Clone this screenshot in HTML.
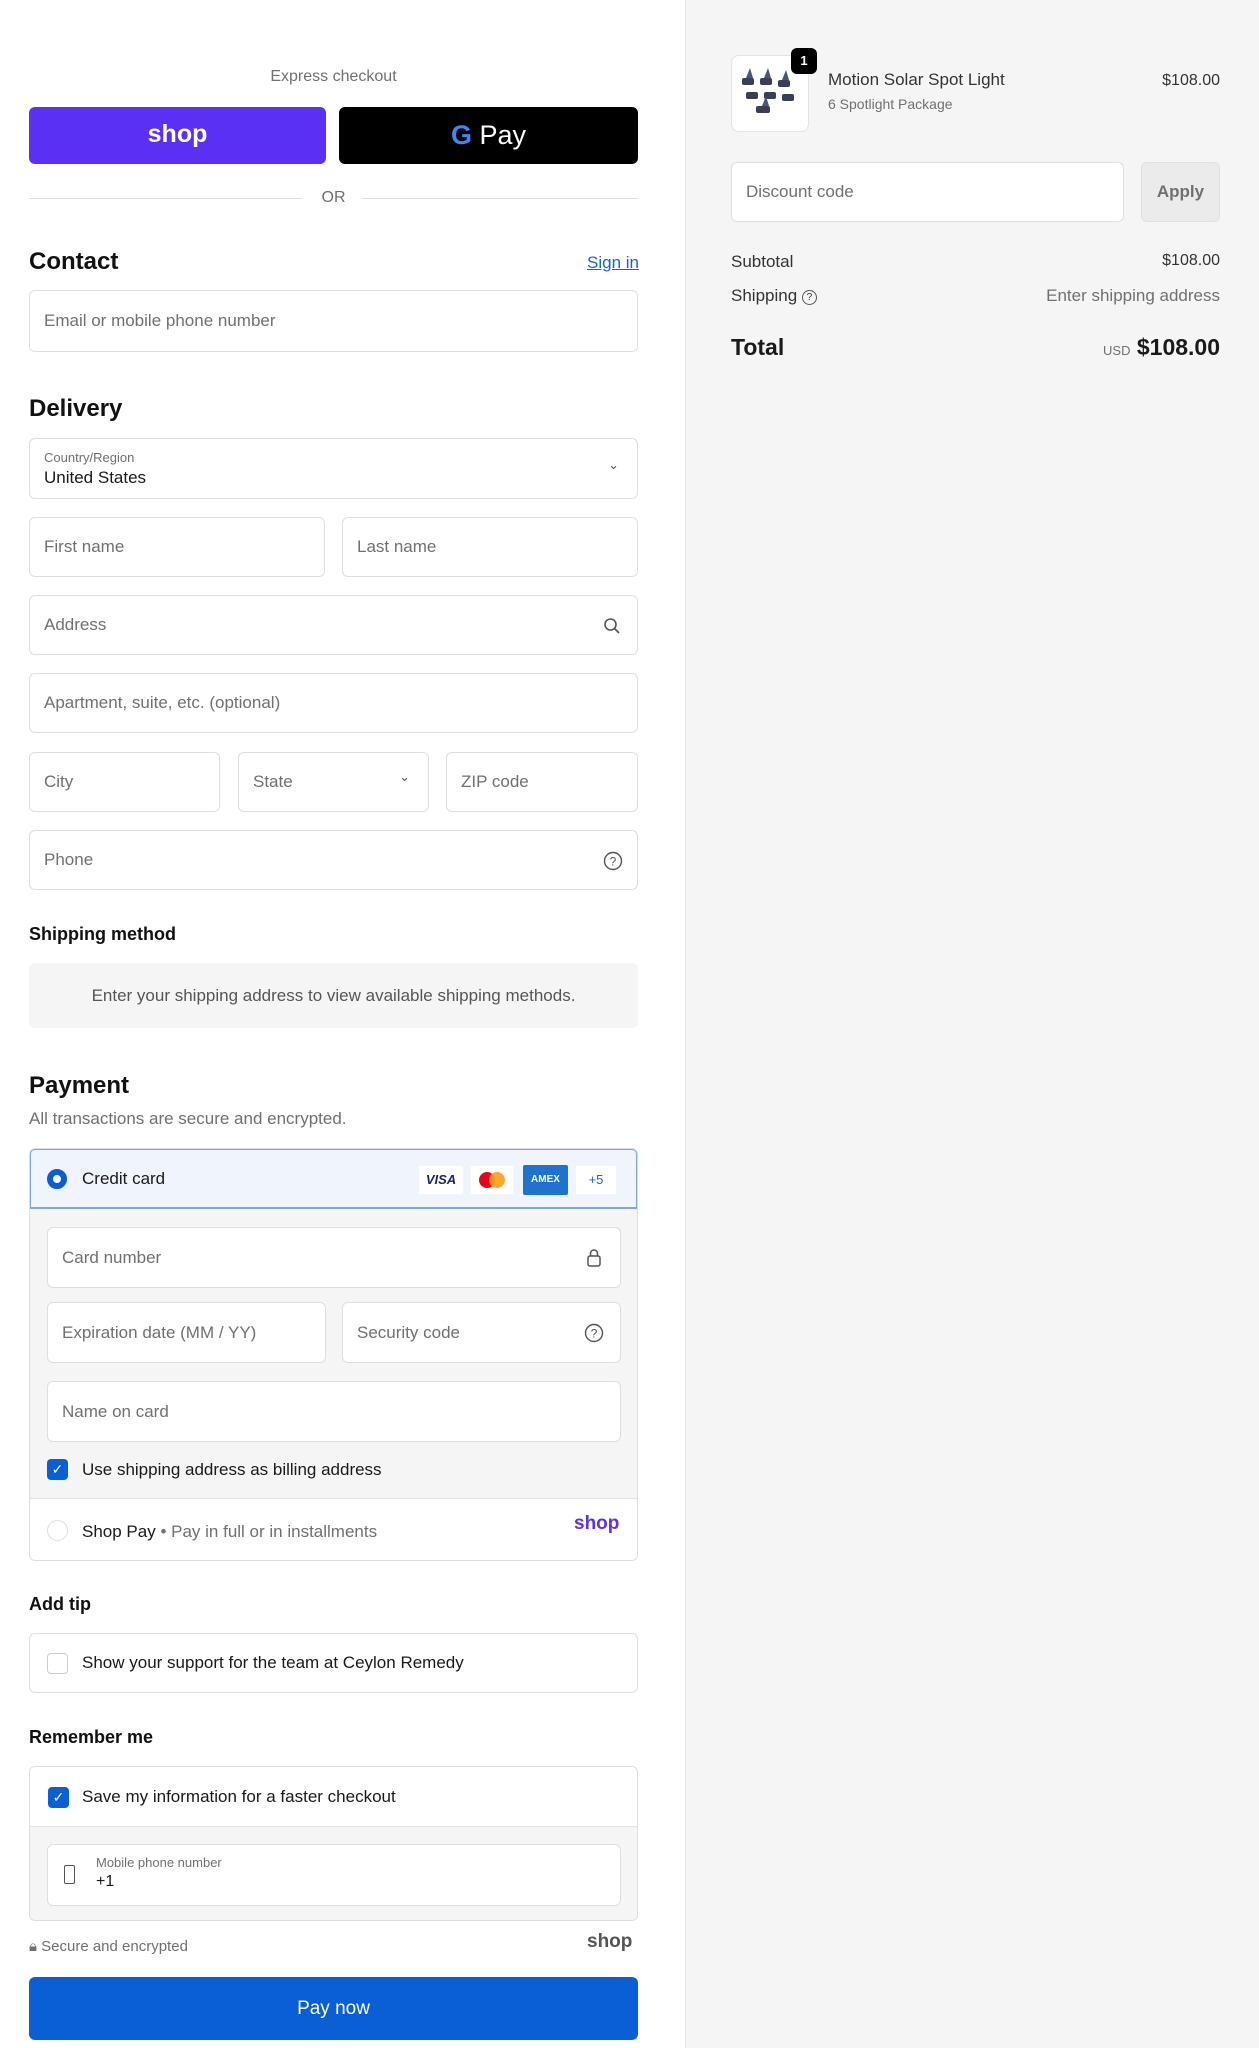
<!DOCTYPE html>
<html><head><meta charset="utf-8"><style>
*{box-sizing:border-box;margin:0;padding:0}
body{width:1259px;height:2048px;position:relative;font-family:"Liberation Sans",sans-serif;color:#1a1a1a;background:#fff;overflow:hidden}
.a{position:absolute}
.right{left:685px;top:0;width:574px;height:2048px;background:#f5f5f5;border-left:1px solid #e3e3e3}
.in{position:absolute;border:1px solid #dedede;border-radius:6px;background:#fff;font-size:17px;color:#707070;padding-left:14px;display:flex;align-items:center}
h2{position:absolute;font-size:24px;font-weight:bold;color:#111}
h3{position:absolute;font-size:18px;font-weight:bold;color:#111}
.t{position:absolute;font-size:16px}
.cb{position:absolute;width:21px;height:21px;border-radius:4px;background:#0b5fd6;color:#fff;font-size:14px;text-align:center;line-height:21px}
</style></head><body>
<div class="a right"></div>
<div class="t" style="left:0;width:667px;text-align:center;top:68px;color:#707070;font-size:16px">Express checkout</div>
<div class="a" style="left:29px;top:107px;width:297px;height:57px;background:#5a31f4;border-radius:6px;color:#fff;font-size:25px;font-weight:bold;text-align:center;line-height:55px">shop</div>
<div class="a" style="left:339px;top:107px;width:299px;height:57px;background:#000;border-radius:6px;color:#fff;font-size:27px;text-align:center;line-height:57px"><span style="font-weight:bold;color:#4285f4">G</span> Pay</div>
<div class="a" style="left:29px;top:198px;width:273px;height:1px;background:#e0e0e0"></div>
<div class="a" style="left:362px;top:198px;width:276px;height:1px;background:#e0e0e0"></div>
<div class="t" style="left:0;width:667px;text-align:center;top:189px;color:#707070">OR</div>
<h2 style="left:29px;top:248px">Contact</h2>
<div class="t" style="left:587px;top:253px;color:#1a62d6;text-decoration:underline;font-size:17px">Sign in</div>
<div class="in" style="left:29px;top:290px;width:609px;height:62px">Email or mobile phone number</div>
<h2 style="left:29px;top:395px">Delivery</h2>
<div class="in" style="left:29px;top:438px;width:609px;height:61px;display:block;padding-top:11px"><div style="font-size:13px">Country/Region</div><div style="font-size:17px;color:#1a1a1a;margin-top:3px">United States</div><span class="a" style="right:18px;top:18px;font-size:13px;color:#555">⌄</span></div>
<div class="in" style="left:29px;top:517px;width:296px;height:60px">First name</div>
<div class="in" style="left:342px;top:517px;width:296px;height:60px">Last name</div>
<div class="in" style="left:29px;top:595px;width:609px;height:60px">Address<svg class="a" style="right:16px;top:21px" width="18" height="18" viewBox="0 0 18 18"><circle cx="7.5" cy="7.5" r="5.5" fill="none" stroke="#555" stroke-width="1.6"/><path d="M11.5 11.5L16 16" stroke="#555" stroke-width="1.6"/></svg></div>
<div class="in" style="left:29px;top:673px;width:609px;height:60px">Apartment, suite, etc. (optional)</div>
<div class="in" style="left:29px;top:752px;width:191px;height:60px">City</div>
<div class="in" style="left:238px;top:752px;width:191px;height:60px">State<span class="a" style="right:18px;top:16px;color:#555;font-size:13px">⌄</span></div>
<div class="in" style="left:446px;top:752px;width:192px;height:60px">ZIP code</div>
<div class="in" style="left:29px;top:830px;width:609px;height:60px">Phone<svg class="a" style="right:14px;top:20px" width="20" height="20" viewBox="0 0 20 20"><circle cx="10" cy="10" r="8.5" fill="none" stroke="#555" stroke-width="1.4"/><text x="10" y="14.5" font-size="12" text-anchor="middle" fill="#555" font-family="Liberation Sans">?</text></svg></div>
<h3 style="left:29px;top:924px">Shipping method</h3>
<div class="a" style="left:29px;top:963px;width:609px;height:65px;background:#f5f5f5;border-radius:6px;text-align:center;line-height:65px;font-size:17px;color:#555">Enter your shipping address to view available shipping methods.</div>
<h2 style="left:29px;top:1072px">Payment</h2>
<div class="t" style="left:29px;top:1109px;color:#707070;font-size:17px">All transactions are secure and encrypted.</div>
<div class="a" style="left:29px;top:1148px;width:609px;height:413px;border:1px solid #dedede;border-radius:6px;background:#f5f5f5;overflow:hidden">
 <div class="a" style="left:-1px;top:-1px;width:609px;height:61px;border:2px solid #7ea6e0;border-radius:6px 6px 0 0;background:#f0f4fc"></div>
 <div class="a" style="left:17px;top:20px;width:20px;height:20px;border-radius:50%;border:6px solid #0b5fd6;background:#fff"></div>
 <div class="t" style="left:52px;top:20px;font-size:17px">Credit card</div>
 <div class="a" style="left:389px;top:17px;width:44px;height:28px;background:#fff;color:#1a1f71;font-weight:bold;font-style:italic;font-size:13px;text-align:center;line-height:28px">VISA</div>
 <div class="a" style="left:441px;top:17px;width:42px;height:28px;background:#fff"><div class="a" style="left:8px;top:6px;width:16px;height:16px;border-radius:50%;background:#eb001b"></div><div class="a" style="left:18px;top:6px;width:16px;height:16px;border-radius:50%;background:#f79e1b;opacity:.9"></div></div>
 <div class="a" style="left:493px;top:16px;width:45px;height:30px;background:#1f72cd;color:#fff;font-size:10px;font-weight:bold;text-align:center;line-height:30px;border-radius:2px">AMEX</div>
 <div class="a" style="left:546px;top:17px;width:40px;height:28px;background:#fff;color:#1a62d6;font-size:13px;text-align:center;line-height:28px">+5</div>
 <div class="in" style="left:17px;top:78px;width:574px;height:61px">Card number<svg class="a" style="right:18px;top:20px" width="16" height="20" viewBox="0 0 16 20"><rect x="2" y="8" width="12" height="10" rx="2" fill="none" stroke="#555" stroke-width="1.5"/><path d="M4.5 8V5.5a3.5 3.5 0 0 1 7 0V8" fill="none" stroke="#555" stroke-width="1.5"/></svg></div>
 <div class="in" style="left:17px;top:153px;width:279px;height:61px">Expiration date (MM / YY)</div>
 <div class="in" style="left:312px;top:153px;width:279px;height:61px">Security code<svg class="a" style="right:16px;top:20px" width="20" height="20" viewBox="0 0 20 20"><circle cx="10" cy="10" r="8.5" fill="none" stroke="#555" stroke-width="1.4"/><text x="10" y="14.5" font-size="12" text-anchor="middle" fill="#555" font-family="Liberation Sans">?</text></svg></div>
 <div class="in" style="left:17px;top:232px;width:574px;height:61px">Name on card</div>
 <div class="cb" style="left:17px;top:310px">✓</div>
 <div class="t" style="left:52px;top:311px;font-size:17px">Use shipping address as billing address</div>
 <div class="a" style="left:0;top:349px;width:609px;height:64px;background:#fff;border-top:1px solid #e3e3e3"></div>
 <div class="a" style="left:17px;top:371px;width:21px;height:21px;border-radius:50%;border:1px solid #ddd;background:#fff"></div>
 <div class="t" style="left:52px;top:373px;font-size:17px">Shop Pay <span style="color:#707070">• Pay in full or in installments</span></div>
 <div class="t" style="left:544px;top:364px;color:#5a31f4;font-weight:bold;font-size:19px">shop</div>
</div>
<h3 style="left:29px;top:1594px">Add tip</h3>
<div class="in" style="left:29px;top:1633px;width:609px;height:60px;color:#1a1a1a;padding-left:17px"><span style="display:inline-block;width:21px;height:21px;border:1px solid #ccc;border-radius:4px;margin-right:14px"></span>Show your support for the team at Ceylon Remedy</div>
<h3 style="left:29px;top:1727px">Remember me</h3>
<div class="a" style="left:29px;top:1766px;width:609px;height:155px;border:1px solid #dedede;border-radius:6px;background:#f5f5f5;overflow:hidden">
 <div class="a" style="left:0;top:0;width:609px;height:60px;background:#fff;border-bottom:1px solid #e3e3e3"></div>
 <div class="cb" style="left:18px;top:20px">✓</div>
 <div class="t" style="left:52px;top:20px;font-size:17px">Save my information for a faster checkout</div>
 <div class="in" style="left:17px;top:77px;width:574px;height:62px;display:block;padding-left:48px;padding-top:10px"><div style="font-size:13px">Mobile phone number</div><div style="font-size:16px;color:#1a1a1a;margin-top:3px">+1</div><div class="a" style="left:16px;top:20px;width:11px;height:19px;border:1.5px solid #555;border-radius:2px"></div></div>
</div>
<div class="t" style="left:29px;top:1938px;font-size:15px;color:#707070">🔒︎ Secure and encrypted</div>
<div class="t" style="left:587px;top:1931px;font-size:19px;font-weight:bold;color:#555">shop</div>
<div class="a" style="left:29px;top:1977px;width:609px;height:63px;background:#0b5fd6;border-radius:6px;color:#fff;font-size:19px;text-align:center;line-height:63px">Pay now</div>

<div class="a" style="left:731px;top:55px;width:78px;height:77px;background:#fff;border:1px solid #e3e3e3;border-radius:8px"><svg width="76" height="75" viewBox="0 0 76 75"><g fill="#3a3f55"><rect x="10" y="22" width="12" height="7" rx="2"/><rect x="28" y="22" width="12" height="7" rx="2"/><rect x="46" y="24" width="12" height="7" rx="2"/><rect x="14" y="36" width="12" height="7" rx="2"/><rect x="32" y="36" width="12" height="7" rx="2"/><rect x="50" y="38" width="12" height="7" rx="2"/><rect x="24" y="50" width="14" height="7" rx="2"/><path d="M14 22l4-10 3 10zM32 22l4-10 3 10zM50 24l4-10 3 10zM30 50l4-10 3 10z" fill="#4b5578"/></g></svg></div>
<div class="a" style="left:791px;top:48px;width:26px;height:26px;background:#000;color:#fff;border-radius:6px;font-size:13px;font-weight:bold;text-align:center;line-height:26px">1</div>
<div class="t" style="left:828px;top:70px;font-size:17px;color:#333">Motion Solar Spot Light</div>
<div class="t" style="left:828px;top:96px;font-size:14px;color:#707070">6 Spotlight Package</div>
<div class="t" style="left:1080px;width:140px;text-align:right;top:72px;font-size:16px;color:#333">$108.00</div>
<div class="in" style="left:731px;top:162px;width:393px;height:60px;border-radius:6px">Discount code</div>
<div class="a" style="left:1141px;top:162px;width:79px;height:60px;background:#ebebeb;border:1px solid #e0e0e0;border-radius:6px;color:#707070;font-size:17px;font-weight:bold;text-align:center;line-height:58px">Apply</div>
<div class="t" style="left:731px;top:252px;font-size:17px;color:#333">Subtotal</div>
<div class="t" style="left:1080px;width:140px;text-align:right;top:252px;color:#333">$108.00</div>
<div class="t" style="left:731px;top:286px;font-size:17px;color:#333">Shipping <span style="display:inline-block;width:15px;height:15px;border:1.3px solid #555;border-radius:50%;font-size:10px;text-align:center;line-height:13px;vertical-align:1px">?</span></div>
<div class="t" style="left:980px;width:240px;text-align:right;top:286px;color:#707070;font-size:17px">Enter shipping address</div>
<div class="t" style="left:731px;top:334px;font-size:23px;font-weight:bold">Total</div>
<div class="t" style="left:1000px;width:220px;text-align:right;top:334px;font-size:23px;font-weight:bold"><span style="font-size:13px;font-weight:normal;color:#707070">USD</span> $108.00</div>
</body></html>
